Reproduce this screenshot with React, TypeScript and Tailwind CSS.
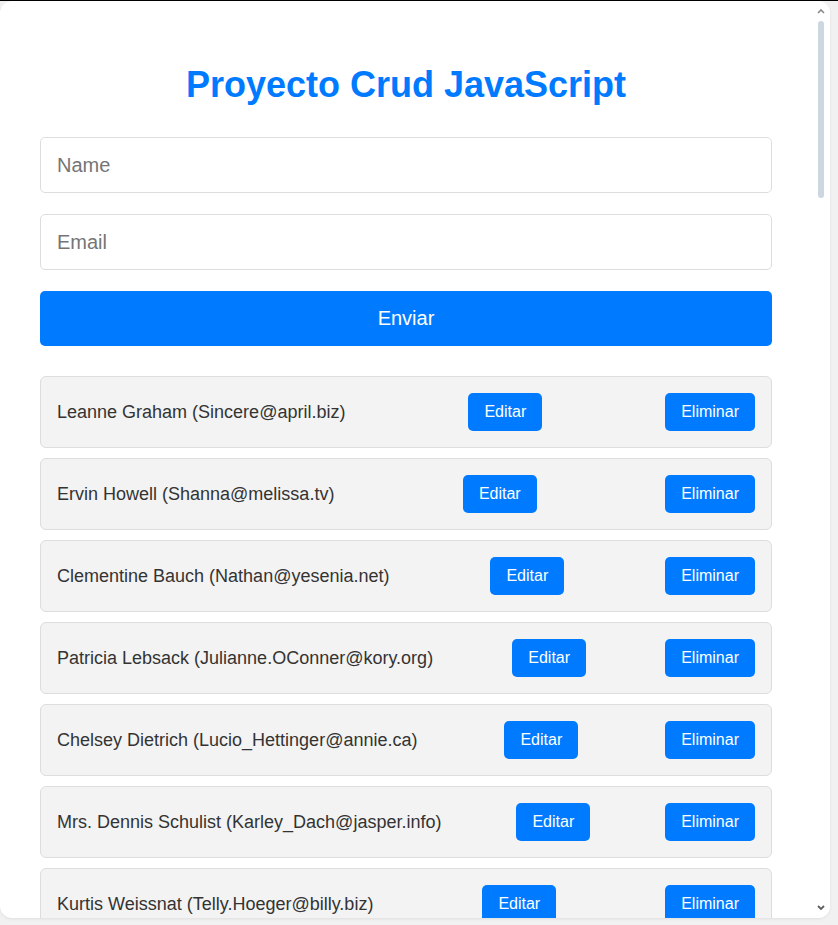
import { useState } from 'react';

type User = { id: number; name: string; email: string };

const initialUsers: User[] = [
  { id: 1, name: 'Leanne Graham', email: 'Sincere@april.biz' },
  { id: 2, name: 'Ervin Howell', email: 'Shanna@melissa.tv' },
  { id: 3, name: 'Clementine Bauch', email: 'Nathan@yesenia.net' },
  { id: 4, name: 'Patricia Lebsack', email: 'Julianne.OConner@kory.org' },
  { id: 5, name: 'Chelsey Dietrich', email: 'Lucio_Hettinger@annie.ca' },
  { id: 6, name: 'Mrs. Dennis Schulist', email: 'Karley_Dach@jasper.info' },
  { id: 7, name: 'Kurtis Weissnat', email: 'Telly.Hoeger@billy.biz' },
];

function Scrollbar() {
  return (
    <div className="flex w-[18px] shrink-0 flex-col items-center bg-white">
      <svg width="10" height="16" viewBox="0 0 10 16" className="mt-[2px]" aria-hidden="true">
        <path d="M2 10 L5 7 L8 10" fill="none" stroke="#8a8a8a" strokeWidth="1.6" />
      </svg>
      <div className="mt-[2px] h-[177px] w-[6px] rounded-full bg-[#cdd7e1]" />
      <div className="flex-1" />
      <svg width="10" height="16" viewBox="0 0 10 16" className="mb-[2px]" aria-hidden="true">
        <path d="M2 6 L5 9 L8 6" fill="none" stroke="#5f5f5f" strokeWidth="1.8" />
      </svg>
    </div>
  );
}

export default function App() {
  const [users, setUsers] = useState(initialUsers);
  const [name, setName] = useState('');
  const [email, setEmail] = useState('');

  const submit = (e: React.FormEvent) => {
    e.preventDefault();
    if (!name || !email) return;
    setUsers((list) => [...list, { id: Date.now(), name, email }]);
    setName('');
    setEmail('');
  };

  const remove = (id: number) => {
    setUsers((list) => list.filter((user) => user.id !== id));
  };

  return (
    <div className="h-[925px] w-[838px] overflow-hidden border-t border-black bg-[#f1f1f1] font-['Liberation_Sans',Arial,sans-serif]">
      <div className="flex h-[917px] w-[830px] overflow-hidden rounded-[12px] bg-white shadow-[0_1px_3px_rgba(0,0,0,0.08)]">
        <main className="w-[812px] shrink-0 overflow-hidden px-10 pt-[63px]">
          <h1 className="text-center text-[36px] font-bold leading-[41px] text-[#007bff]">
            Proyecto Crud JavaScript
          </h1>

          <form onSubmit={submit} className="mt-[32px] flex flex-col gap-[21px]">
            <input
              type="text"
              placeholder="Name"
              value={name}
              onChange={(e) => setName(e.target.value)}
              className="h-[56px] rounded-[5px] border border-[#dddddd] px-4 text-[20px] text-[#333] outline-none placeholder:text-[#757575]"
            />
            <input
              type="email"
              placeholder="Email"
              value={email}
              onChange={(e) => setEmail(e.target.value)}
              className="h-[56px] rounded-[5px] border border-[#dddddd] px-4 text-[20px] text-[#333] outline-none placeholder:text-[#757575]"
            />
            <button
              type="submit"
              className="h-[55px] rounded-[5px] bg-[#007bff] pb-[2px] text-[20px] text-white"
            >
              Enviar
            </button>
          </form>

          <ul className="mt-[30px] flex flex-col gap-[10px]">
            {users.map((user) => (
              <li
                key={user.id}
                className="flex h-[72px] shrink-0 items-center justify-between rounded-[6px] border border-[#dddddd] bg-[#f3f3f3] px-4 text-[18px] text-[#333]"
              >
                <span>
                  {user.name} ({user.email})
                </span>
                <button
                  type="button"
                  className="rounded-[5px] bg-[#007bff] px-4 py-[10px] text-[16px] leading-[18px] text-white"
                >
                  Editar
                </button>
                <button
                  type="button"
                  onClick={() => remove(user.id)}
                  className="rounded-[5px] bg-[#007bff] px-4 py-[10px] text-[16px] leading-[18px] text-white"
                >
                  Eliminar
                </button>
              </li>
            ))}
          </ul>
        </main>
        <Scrollbar />
      </div>
    </div>
  );
}
